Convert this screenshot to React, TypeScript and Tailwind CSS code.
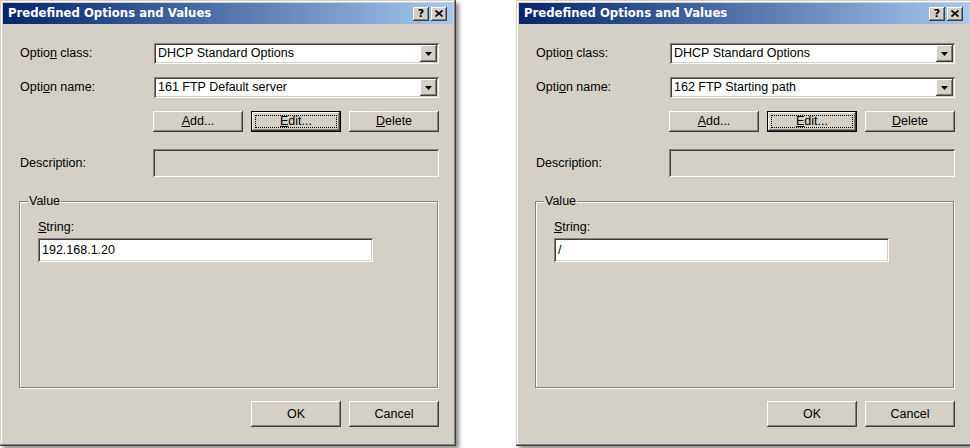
import React from "react";

const raised =
  "shadow-[inset_-1px_-1px_#404040,inset_1px_1px_#ffffff,inset_-2px_-2px_#808080,inset_2px_2px_#d4d0c8]";
const sunken =
  "shadow-[inset_1px_1px_#808080,inset_-1px_-1px_#ffffff,inset_2px_2px_#404040,inset_-2px_-2px_#d4d0c8]";

function TitleBtn({ children }: { children: React.ReactNode }) {
  return (
    <div className={`w-[16px] h-[14px] bg-[#d4d0c8] ${raised} flex items-center justify-center`}>
      {children}
    </div>
  );
}

function Combo({ text }: { text: string }) {
  return (
    <div className={`w-[285px] h-[21px] bg-white ${sunken} flex items-center pl-[4px]`}>
      <span className="flex-1 whitespace-nowrap">{text}</span>
      <div className={`mr-[2px] w-[17px] h-[17px] bg-[#d4d0c8] ${raised} flex items-center justify-center`}>
        <svg width="7" height="4" viewBox="0 0 7 4">
          <polygon points="0,0 7,0 3.5,4" fill="#000" />
        </svg>
      </div>
    </div>
  );
}

function Btn({ children, h, focused }: { children: React.ReactNode; h: string; focused?: boolean }) {
  if (focused) {
    return (
      <div className={`w-[90px] ${h} border border-black bg-[#d4d0c8]`}>
        <div className={`w-full h-full ${raised} p-[3px]`}>
          <div className="w-full h-full border border-dotted border-black flex items-center justify-center">
            {children}
          </div>
        </div>
      </div>
    );
  }
  return (
    <div className={`w-[90px] ${h} bg-[#d4d0c8] ${raised} flex items-center justify-center`}>{children}</div>
  );
}

function Dialog({ optionName, value }: { optionName: string; value: string }) {
  return (
    <div className="w-[456px] h-[446px] shrink-0 bg-[#d4d0c8] p-[3px] flex flex-col shadow-[inset_-1px_-1px_#404040,inset_1px_1px_#d4d0c8,inset_-2px_-2px_#808080,inset_2px_2px_#ffffff,3px_3px_4px_rgba(0,0,0,0.45)]">
      <div className="h-[21px] shrink-0 flex items-center bg-linear-to-r from-[#0a246a] to-[#a6caf0] pl-[5px] pr-[6px] gap-[2px]">
        <span className="flex-1 text-white font-bold text-[11.7px] font-['DejaVu_Sans',sans-serif] whitespace-nowrap">
          Predefined Options and Values
        </span>
        <TitleBtn>
          <span className="text-[11px] font-bold leading-none font-['DejaVu_Sans',sans-serif] text-black">?</span>
        </TitleBtn>
        <TitleBtn>
          <svg width="8" height="7" viewBox="0 0 8 7">
            <path d="M0.5 0.5 L7.5 6.5 M7.5 0.5 L0.5 6.5" stroke="#000" strokeWidth="1.6" />
          </svg>
        </TitleBtn>
      </div>
      <div className="flex-1 flex flex-col pl-[17px] pt-[19px] text-[12.5px] leading-[15px] text-black font-['Liberation_Sans',Arial,sans-serif]">
        <div className="flex items-center h-[21px]">
          <span className="w-[134px]">
            Optio<u>n</u> class:
          </span>
          <Combo text="DHCP Standard Options" />
        </div>
        <div className="flex items-center h-[21px] mt-[13px]">
          <span className="w-[134px]">
            Opti<u>o</u>n name:
          </span>
          <Combo text={optionName} />
        </div>
        <div className="flex gap-[8px] ml-[133px] mt-[13px]">
          <Btn h="h-[21px]">
            <span>
              <u>A</u>dd...
            </span>
          </Btn>
          <Btn h="h-[21px]" focused>
            <span>
              <u>E</u>dit...
            </span>
          </Btn>
          <Btn h="h-[21px]">
            <span>
              <u>D</u>elete
            </span>
          </Btn>
        </div>
        <div className="flex items-center mt-[17px]">
          <span className="w-[133px]">Description:</span>
          <div className={`w-[286px] h-[28px] bg-[#d4d0c8] ${sunken}`} />
        </div>
        <fieldset className="mt-[17px] ml-[-1px] w-[419px] h-[194px] border border-[#808080] shadow-[inset_1px_1px_#ffffff,1px_1px_#ffffff]">
          <legend className="ml-[8px] px-[1px] bg-[#d4d0c8] leading-[15px]">Value</legend>
          <div className="pl-[18px] pt-[11px] flex flex-col">
            <span>
              <u>S</u>tring:
            </span>
            <div className={`mt-[3px] w-[335px] h-[24px] bg-white ${sunken} flex items-center pl-[4px]`}>
              {value}
            </div>
          </div>
        </fieldset>
        <div className="flex gap-[8px] ml-[231px] mt-[13px]">
          <Btn h="h-[26px]">OK</Btn>
          <Btn h="h-[26px]">Cancel</Btn>
        </div>
      </div>
    </div>
  );
}

export default function App() {
  return (
    <div className="w-[970px] h-[448px] overflow-hidden bg-white flex gap-[60px]">
      <Dialog optionName="161 FTP Default server" value="192.168.1.20" />
      <Dialog optionName="162 FTP Starting path" value="/" />
    </div>
  );
}
